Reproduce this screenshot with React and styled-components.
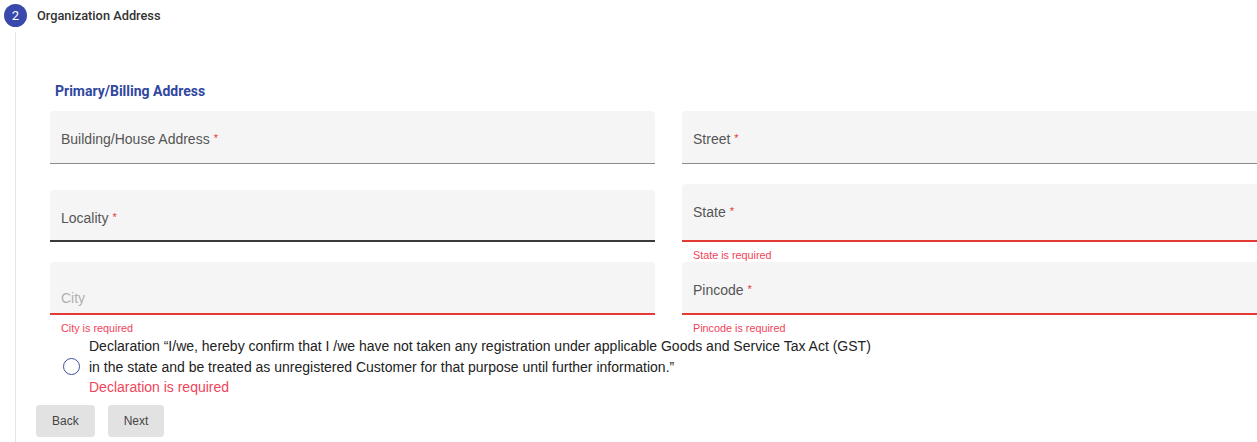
import React from 'react'
import styled, { createGlobalStyle } from 'styled-components';

const GlobalStyle = createGlobalStyle`
    html, body {
        margin: 0;
        padding: 0;
        background: #fff;
        overflow: hidden;
    }
    body {
        font-family: "Liberation Sans", Arial, sans-serif;
    }
`

const Page = styled.div`
    width: 1257px;
    height: 442px;
    overflow: hidden;
`

const StepHeader = styled.div`
    display: flex;
    align-items: center;
    height: 30px;
    padding-left: 4px;
`

const StepIcon = styled.div`
    width: 23px;
    height: 23px;
    border-radius: 50%;
    background: #3949ab;
    color: #fff;
    font-family: Roboto, sans-serif;
    font-size: 13px;
    display: flex;
    align-items: center;
    justify-content: center;
    margin-right: 10px;
`

const StepTitle = styled.div`
    font-family: Roboto, sans-serif;
    font-weight: 500;
    font-size: 12.8px;
    color: #333;
`

const StepContent = styled.div`
    margin: 2px 0 0 15px;
    border-left: 1px solid #e4e4e4;
    padding: 51px 0 6px 20px;
`

const Section = styled.div`
    padding-left: 14px;
`

const SectionTitle = styled.div`
    font-family: Roboto, sans-serif;
    font-weight: 700;
    font-size: 14px;
    line-height: 16px;
    color: #2f47a0;
    padding-left: 5px;
    margin-bottom: 12px;
`

const FieldGrid = styled.div`
    display: grid;
    grid-template-columns: 605px 605px;
    column-gap: 27px;
    align-items: end;
`

const FieldBox = styled.div`
    height: ${p => p.$height}px;
    box-sizing: border-box;
    background: #f5f5f5;
    border-radius: 4px 4px 0 0;
    border-bottom: ${p => p.$state === 'error' ? '2px solid #e53935'
        : p.$state === 'active' ? '2px solid #3a3a3a'
        : '1px solid #8c8c8c'};
    padding: ${p => p.$placeholder ? 27 : 19}px 11px 0;
`

const Label = styled.span`
    font-size: 14px;
    line-height: 16px;
    color: ${p => p.$placeholder ? '#b0b0b0' : '#555'};
`

const Star = styled.span`
    color: #e53935;
    font-size: 11px;
    margin-left: 4px;
    vertical-align: 2px;
`

const Helper = styled.div`
    height: 20px;
    box-sizing: border-box;
    padding: 7px 0 0 11px;
    font-size: 10.8px;
    line-height: 13px;
    color: #f0445a;
`

const Declaration = styled.label`
    display: flex;
    align-items: center;
    gap: 9px;
    padding-left: 27px;
    margin-top: 1px;
`

const Radio = styled.span`
    width: 17px;
    height: 17px;
    box-sizing: border-box;
    border-radius: 50%;
    border: 1.5px solid #3f4f9e;
    flex-shrink: 0;
`

const DeclText = styled.div`
    font-size: 14px;
    line-height: 20.5px;
    color: #222;
`

const DeclError = styled.div`
    color: #f0445a;
`

const Actions = styled.div`
    display: flex;
    gap: 13px;
    margin-top: 7px;
`

const Button = styled.button`
    height: 32px;
    padding: 0 16px;
    border: none;
    border-radius: 4px;
    background: #e2e2e2;
    color: #444;
    font-family: "Liberation Sans", Arial, sans-serif;
    font-size: 12px;
    cursor: pointer;
`

const fields = [
    { label: 'Building/House Address', required: true, height: 53 },
    { label: 'Street', required: true, height: 53 },
    { label: 'Locality', required: true, height: 52, state: 'active' },
    { label: 'State', required: true, height: 58, state: 'error', error: 'State is required' },
    { label: 'City', placeholder: true, height: 53, state: 'error', error: 'City is required' },
    { label: 'Pincode', required: true, height: 53, state: 'error', error: 'Pincode is required' },
]

function Field({ label, required, height, state, error, placeholder }) {
    return (
        <div>
            <FieldBox $height={height} $state={state} $placeholder={placeholder}>
                <Label $placeholder={placeholder}>{label}</Label>
                {required && <Star>*</Star>}
            </FieldBox>
            <Helper>{error}</Helper>
        </div>
    )
}

function App() {
    return (
        <Page>
            <GlobalStyle />
            <StepHeader>
                <StepIcon>2</StepIcon>
                <StepTitle>Organization Address</StepTitle>
            </StepHeader>
            <StepContent>
                <Section>
                    <SectionTitle>Primary/Billing Address</SectionTitle>
                    <FieldGrid>
                        {fields.map(f => <Field key={f.label} {...f} />)}
                    </FieldGrid>
                </Section>
                <Declaration>
                    <Radio />
                    <DeclText>
                        <div>Declaration “I/we, hereby confirm that I /we have not taken any registration under applicable Goods and Service Tax Act (GST)</div>
                        <div>in the state and be treated as unregistered Customer for that purpose until further information.”</div>
                        <DeclError>Declaration is required</DeclError>
                    </DeclText>
                </Declaration>
                <Actions>
                    <Button>Back</Button>
                    <Button>Next</Button>
                </Actions>
            </StepContent>
        </Page>
    )
}

export default App
